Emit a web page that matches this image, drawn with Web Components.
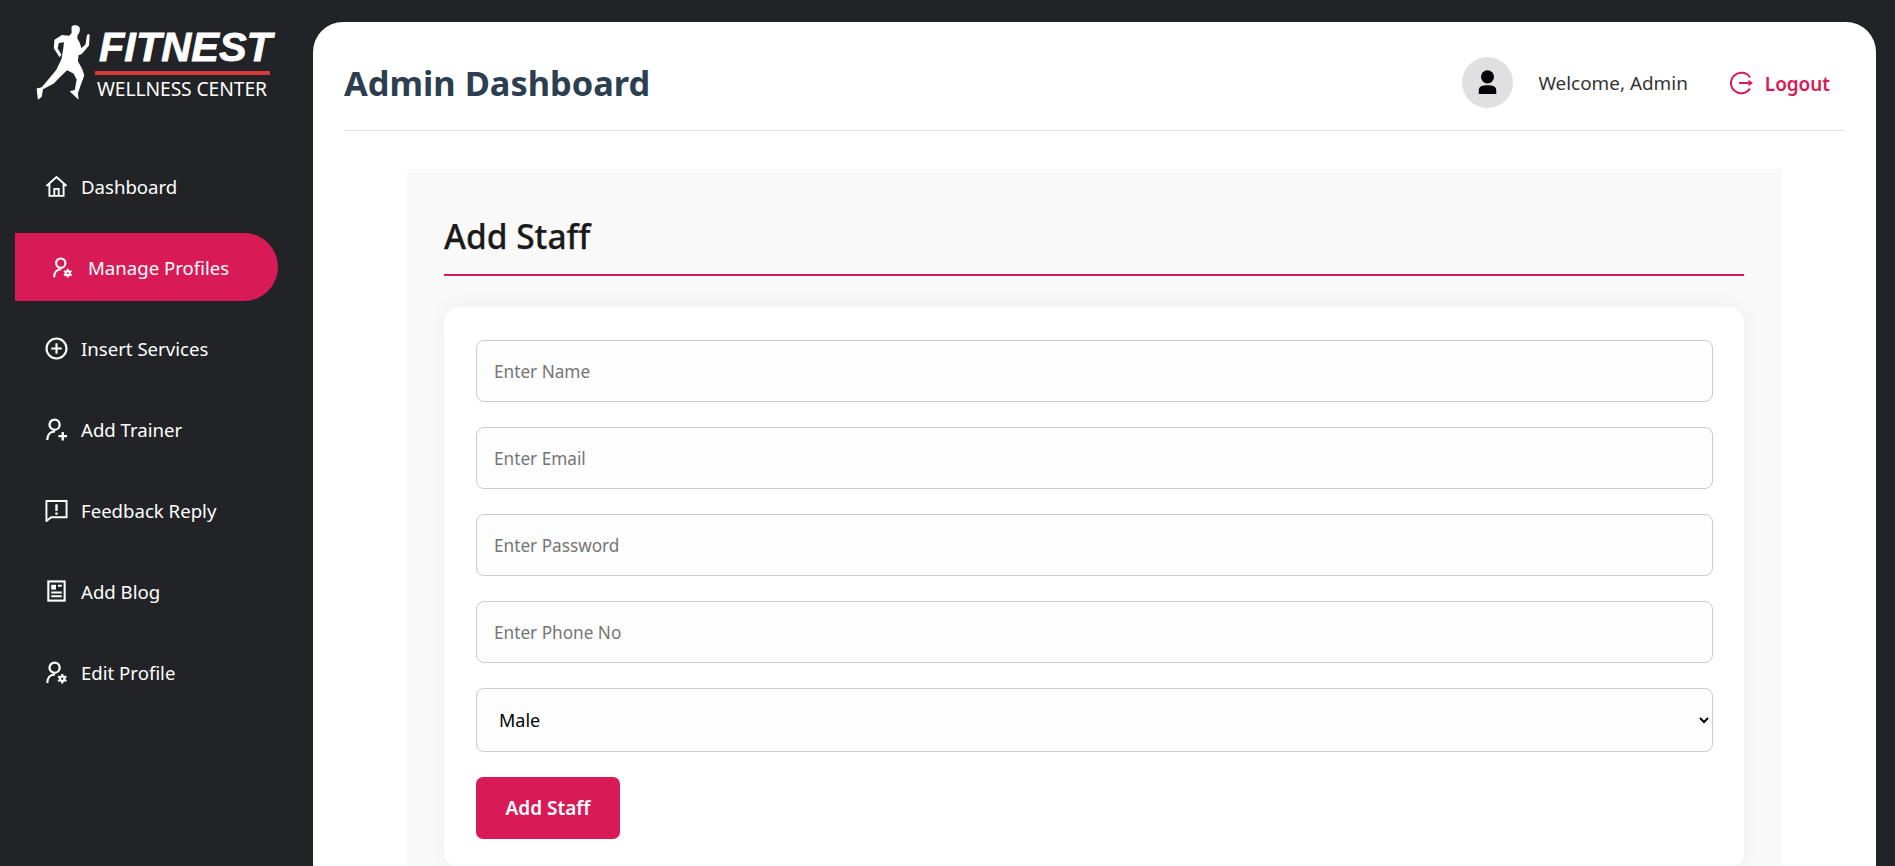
<!DOCTYPE html>
<html lang="en">
<head>
<meta charset="utf-8">
<title>Admin Dashboard</title>
<style>
  html, body { margin: 0; height: 100%; overflow: hidden; }
  body { background: #212327; font-family: "Noto Sans", "Open Sans", sans-serif; display: flex; }
</style>
</head>
<body>
<fit-sidebar>
  <fit-logo></fit-logo>
  <nav-item icon="home">Dashboard</nav-item>
  <nav-item icon="user-gear" active>Manage Profiles</nav-item>
  <nav-item icon="plus-circle">Insert Services</nav-item>
  <nav-item icon="user-plus">Add Trainer</nav-item>
  <nav-item icon="feedback">Feedback Reply</nav-item>
  <nav-item icon="article">Add Blog</nav-item>
  <nav-item icon="user-gear">Edit Profile</nav-item>
</fit-sidebar>
<fit-main>
  <fit-header></fit-header>
  <staff-panel>
    <form-input placeholder="Enter Name"></form-input>
    <form-input placeholder="Enter Email"></form-input>
    <form-input placeholder="Enter Password"></form-input>
    <form-input placeholder="Enter Phone No"></form-input>
    <form-select></form-select>
    <form-button>Add Staff</form-button>
  </staff-panel>
</fit-main>

<script>
const ICONS = {
  home: '<path d="M1.5 11.5 12 2.2l10.5 9.3M4.6 9.2V21.8h14.8V9.2M9.7 21.8v-7.3h4.6v7.3" fill="none" stroke="currentColor" stroke-width="2"/>',
  'user-gear': '<circle cx="10" cy="7" r="5.3" fill="none" stroke="currentColor" stroke-width="2.4"/><path d="M2.4 23c0-5.5 3.2-9 8.1-9" fill="none" stroke="currentColor" stroke-width="2.4"/><circle cx="18" cy="18.5" r="2.4" fill="none" stroke="currentColor" stroke-width="2.4"/><path d="M18 13.5v2M18 21.5v2M13.7 16l1.7 1M20.6 20l1.7 1M13.7 21l1.7-1M20.6 17l1.7-1" stroke="currentColor" stroke-width="2.2"/>',
  'plus-circle': '<circle cx="12" cy="12" r="10.4" fill="none" stroke="currentColor" stroke-width="2.2"/><path d="M12 6.5v11M6.5 12h11" stroke="currentColor" stroke-width="2.2"/>',
  'user-plus': '<circle cx="10" cy="7" r="5.3" fill="none" stroke="currentColor" stroke-width="2.4"/><path d="M2.4 23c0-5.5 3.2-9 8.1-9" fill="none" stroke="currentColor" stroke-width="2.4"/><path d="M18.5 14.5v9M14 19h9" stroke="currentColor" stroke-width="2.4"/>',
  feedback: '<path d="M1.5 2h21v17H6.5L1.5 23Z" fill="none" stroke="currentColor" stroke-width="2"/><path d="M12 5.5v7M12 14v2.4" stroke="currentColor" stroke-width="2.4"/>',
  article: '<rect x="3.5" y="1.5" width="17" height="20" fill="none" stroke="currentColor" stroke-width="2.2"/><path d="M6.5 5h5v5h-5z" fill="currentColor"/><path d="M13.5 6h4M6.5 13h11M6.5 17h11" stroke="currentColor" stroke-width="2.2"/>'
};

class FitSidebar extends HTMLElement {
  constructor() {
    super();
    this.attachShadow({ mode: 'open' }).innerHTML = `
      <style>
        :host { display: flex; flex-direction: column; gap: 13px; width: 313px; flex: none; box-sizing: border-box; padding: 0 35px 0 15px; color: #fff; }
      </style>
      <slot></slot>`;
  }
}
customElements.define('fit-sidebar', FitSidebar);

class FitLogo extends HTMLElement {
  constructor() {
    super();
    this.attachShadow({ mode: 'open' }).innerHTML = `
      <style>
        :host { display: flex; gap: 5px; margin: 24px 0 6px 21px; height: 109px; color: #fff; }
        svg { width: 54px; height: 77px; flex: none; }
        .word { display: flex; flex-direction: column; align-items: flex-start; padding-top: 2px; }
        .name { font: italic bold 41.5px/42px "Liberation Sans", sans-serif; -webkit-text-stroke: .8px #fff; margin-left: 4px; white-space: nowrap; }
        .bar { width: 175px; height: 4px; background: #d63a3a; margin-top: 3px; }
        .sub { font: 400 19.3px/24px "Noto Sans", sans-serif; margin: 2px 0 0 2px; white-space: nowrap; letter-spacing: -.1px; }
      </style>
      <svg viewBox="44 26 170 236" preserveAspectRatio="none" aria-hidden="true"><path fill="currentColor" d="M156 34C162 28 176 28 181 36C184 44 181 54 175 60L174 70L182 84L187 100L200 88L204 62L208 56L213 60L211 92L188 118L178 122L176 140L190 165L196 184L186 210L176 238L178 258L150 232L166 228L172 196L162 178L142 168L122 186L100 208L66 226L62 250L50 258L46 224L62 220L88 190L108 166L124 134L130 100L132 82L116 84L112 100L124 120L118 128L100 100L102 74L126 60L148 62L156 54Z"/></svg>
      <div class="word">
        <div class="name">FITNEST</div>
        <div class="bar"></div>
        <div class="sub">WELLNESS CENTER</div>
      </div>`;
  }
}
customElements.define('fit-logo', FitLogo);

class NavItem extends HTMLElement {
  constructor() {
    super();
    const active = this.hasAttribute('active');
    this.attachShadow({ mode: 'open' }).innerHTML = `
      <style>
        :host { display: flex; align-items: center; gap: ${active ? 15 : 13}px; height: 68px; box-sizing: border-box; padding-left: ${active ? 37 : 30}px; font-size: 18.6px; color: #fff;
          ${active ? 'background: #d81b56; border-radius: 0 34px 34px 0;' : ''} }
        svg { width: ${active ? 21 : 23}px; height: ${active ? 21 : 23}px; flex: none; }
      </style>
      <svg viewBox="0 0 24 24" aria-hidden="true">${ICONS[this.getAttribute('icon')]}</svg>
      <slot></slot>`;
  }
}
customElements.define('nav-item', NavItem);

class FitMain extends HTMLElement {
  constructor() {
    super();
    this.attachShadow({ mode: 'open' }).innerHTML = `
      <style>
        :host { display: block; flex: none; width: 1563px; height: 844px; margin-top: 22px; background: #fff; border-radius: 30px 30px 0 0; box-sizing: border-box; padding: 0 31px; overflow: hidden; }
      </style>
      <slot></slot>`;
  }
}
customElements.define('fit-main', FitMain);

class FitHeader extends HTMLElement {
  constructor() {
    super();
    this.attachShadow({ mode: 'open' }).innerHTML = `
      <style>
        :host { display: flex; align-items: center; height: 109px; box-sizing: border-box; padding-top: 12px; border-bottom: 1px solid #e0e0e0; }
        h1 { margin: 0 auto 0 0; font-size: 34.4px; font-weight: 700; color: #2c3e50; }
        .avatar { width: 51px; height: 51px; border-radius: 50%; background: #e0e0e0; display: flex; align-items: center; justify-content: center; margin-right: 25px; color: #05060a; }
        .avatar svg { width: 21px; height: 27px; }
        .welcome { font-size: 18.9px; color: #333; margin: 2px 41px 0 0; }
        .logout { display: flex; align-items: center; gap: 12px; margin: 3px 15px 0 0; color: #d81b56; font-size: 18.9px; font-weight: 600; }
        .logout svg { width: 24px; height: 24px; margin-top: -2px; }
      </style>
      <h1>Admin Dashboard</h1>
      <div class="avatar"><svg viewBox="0 0 24 28" aria-hidden="true"><circle cx="12" cy="7.5" r="7.5" fill="currentColor"/><path d="M2 27V23C2 18 6 17 12 17s10 1 10 6v4Z" fill="currentColor"/></svg></div>
      <span class="welcome">Welcome, Admin</span>
      <div class="logout"><svg viewBox="0 0 24 24" aria-hidden="true"><path d="M21 6.5A10.3 10.3 0 1 0 21 17.5" fill="none" stroke="currentColor" stroke-width="2"/><path d="M10 12h11" stroke="currentColor" stroke-width="2.2"/><path d="M19.5 8.8 24 12l-4.5 3.2Z" fill="currentColor"/></svg><span>Logout</span></div>`;
  }
}
customElements.define('fit-header', FitHeader);

class StaffPanel extends HTMLElement {
  constructor() {
    super();
    this.attachShadow({ mode: 'open' }).innerHTML = `
      <style>
        :host { display: block; margin: 38px 63px 0; background: #f9f9f9; padding: 32px 38px 0 37px; height: 700px; }
        h2 { margin: 0; height: 75px; box-sizing: border-box; border-bottom: 2px solid #d81b56; font-size: 33.5px; font-weight: 500; color: #1a1a1a; line-height: 70px; -webkit-text-stroke: .25px #1a1a1a; }
        .card { margin-top: 31px; background: #fff; border-radius: 15px; padding: 33px 31px 28px 32px; box-shadow: 0 0 20px rgba(0,0,0,.05); display: flex; flex-direction: column; gap: 25px; }
      </style>
      <h2>Add Staff</h2>
      <div class="card"><slot></slot></div>`;
  }
}
customElements.define('staff-panel', StaffPanel);

class FormInput extends HTMLElement {
  constructor() {
    super();
    this.attachShadow({ mode: 'open' }).innerHTML = `
      <style>
        :host { display: block; }
        input { display: block; width: 100%; height: 62px; box-sizing: border-box; padding: 0 17px; border: 1px solid #ccc; border-radius: 8px; background: #fdfdfd; font: 17.2px "Noto Sans", sans-serif; outline: none; }
        input::placeholder { color: #757575; }
      </style>
      <input type="text" placeholder="${this.getAttribute('placeholder')}">`;
  }
}
customElements.define('form-input', FormInput);

class FormSelect extends HTMLElement {
  constructor() {
    super();
    this.attachShadow({ mode: 'open' }).innerHTML = `
      <style>
        :host { display: block; }
        select { display: block; width: 100%; height: 64px; box-sizing: border-box; padding: 0 0 0 18px; border: 1px solid #ccc; border-radius: 8px; background: #fdfdfd; color: #000; font: 18px "Noto Sans", sans-serif; }
      </style>
      <select><option>Male</option><option>Female</option></select>`;
  }
}
customElements.define('form-select', FormSelect);

class FormButton extends HTMLElement {
  constructor() {
    super();
    this.attachShadow({ mode: 'open' }).innerHTML = `
      <style>
        :host { display: block; }
        button { display: block; width: 144px; height: 62px; border: 0; border-radius: 7px; background: #d81b56; color: #fff; font: 600 19px "Noto Sans", sans-serif; }
      </style>
      <button type="button"><slot></slot></button>`;
  }
}
customElements.define('form-button', FormButton);
</script>
</body>
</html>
